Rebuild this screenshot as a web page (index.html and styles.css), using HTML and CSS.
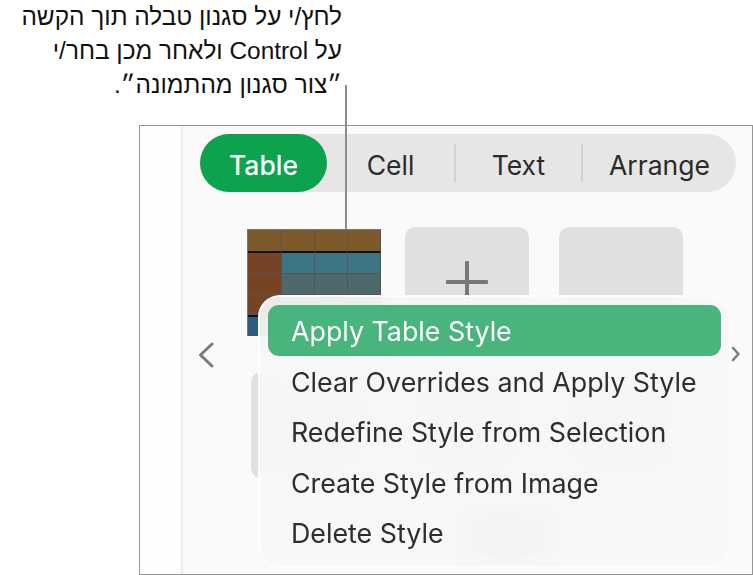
FILE: index.html
```html
<!DOCTYPE html>
<html lang="he">
<head>
<meta charset="utf-8">
<title>Table style menu</title>
<link rel="stylesheet" href="styles.css">
</head>
<body>
<div class="page">
  <p class="caption" dir="rtl">לחץ/י על סגנון טבלה תוך הקשה<br>על Control ולאחר מכן בחר/י<br>״צור סגנון מהתמונה״.</p>
  <div class="frame" dir="ltr">
    <div class="rail"></div>
    <div class="panel">
      <div class="tabs">
        <div class="tab tab-active">Table</div>
        <div class="tab tab-cell">Cell</div>
        <div class="tab-sep"></div>
        <div class="tab tab-text">Text</div>
        <div class="tab-sep"></div>
        <div class="tab tab-arrange">Arrange</div>
      </div>
      <div class="row row-first">
        <div class="thumb">
          <div class="c hd"></div><div class="c hd"></div><div class="c hd"></div><div class="c hd"></div>
          <div class="c side"></div><div class="c teal"></div><div class="c teal"></div><div class="c teal"></div>
          <div class="c side"></div><div class="c slate"></div><div class="c slate"></div><div class="c slate"></div>
          <div class="c side"></div><div class="c slate"></div><div class="c slate"></div><div class="c slate"></div>
          <div class="c ft"></div><div class="c ft"></div><div class="c ft"></div><div class="c ft"></div>
        </div>
        <div class="card card-plus">
          <svg class="plus" width="42" height="42" viewBox="0 0 42 42"><path d="M21 1.500V40.500M1.500 21H40.500" fill="none" stroke="#777" stroke-width="4" stroke-linecap="round"/></svg>
        </div>
        <div class="card card-last"></div>
      </div>
      <div class="row row-second">
        <div class="card card-low"></div>
        <div class="card card-low card-mid"></div>
        <div class="card card-low card-last"></div>
      </div>
      <div class="ghost"></div>
    </div>
    <svg class="chev chev-l" width="16" height="26" viewBox="0 0 16 26"><path d="M14 2L2.500 13L14 24" fill="none" stroke="#7b7b7b" stroke-width="3" stroke-linecap="round" stroke-linejoin="round"/></svg>
    <svg class="chev chev-r" width="10" height="16" viewBox="0 0 10 16"><path d="M2 2L7.500 8L2 14" fill="none" stroke="#7b7b7b" stroke-width="2.500" stroke-linecap="round" stroke-linejoin="round"/></svg>
    <div class="menu">
      <div class="item item-on">Apply Table Style</div>
      <div class="item">Clear Overrides and Apply Style</div>
      <div class="item">Redefine Style from Selection</div>
      <div class="item">Create Style from Image</div>
      <div class="item">Delete Style</div>
    </div>
  </div>
  <div class="leader"></div>
</div>
</body>
</html>
```
FILE: styles.css
```css
* { box-sizing: border-box; }
html, body { margin: 0; padding: 0; background: #fff; }
.page { position: relative; width: 753px; height: 575px; overflow: hidden; font-family: "Inter", "Liberation Sans", sans-serif; }
.caption { margin: 0; width: 342px; height: 125px; font: 24.400px/34px "Liberation Sans", sans-serif; color: #111; text-align: right; }
.frame { position: relative; display: flex; width: 614px; height: 450px; margin-left: 139px; border: 1px solid #969696; overflow: hidden; background: #fafafa; }
.rail { width: 43px; background: #fefefe; border-right: 2px solid #ececec; flex: none; }
.panel { flex: 1; padding: 8px 0 0 17px; min-width: 0; }
.tabs { display: flex; align-items: center; width: 536px; height: 58px; background: #e6e6e6; border-radius: 29px; font-size: 26.500px; color: #2b2b2b; }
.tab { text-align: center; line-height: 62px; height: 58px; }
.tab-active { width: 127px; background: #0ca24e; color: #fff; border-radius: 29px; font-weight: 500; }
.tab-cell { width: 127px; }
.tab-text { width: 125px; }
.tab-arrange { width: 153px; }
.tab-sep { width: 2px; height: 38px; background: #d2d2d2; flex: none; }
.row { display: flex; }
.row-first { margin-top: 35px; padding-left: 47px; }
.row-second { margin-top: 35px; padding-left: 51px; }
.thumb { display: grid; grid-template-columns: 34px 33px 33px 33px; grid-template-rows: 23px 21px 21px 20px 21px; width: 134px; height: 107px; margin-top: 2px; border: 1px solid #777; background: #555; flex: none; }
.c { border-right: 1px solid #555; border-bottom: 1px solid #555; }
.hd { background: #7d5a2c; border-bottom: 2px solid #111; }
.side { background: #764325; }
.teal { background: #3d7585; }
.slate { background: #4e686c; }
.ft { background: #2b5d7e; border-top: 2px solid #111; }
.card { width: 124px; height: 110px; background: #e0e0e0; border-radius: 10px; flex: none; }
.card-plus { margin-left: 24px; display: flex; align-items: center; justify-content: center; }
.card-last { margin-left: 30px; }
.card-low { height: 106px; }
.card-mid { margin-left: 30px; }
.ghost { width: 85px; height: 40px; margin: 37px 0 0 265px; background: #a8a8a8; }
.chev { position: absolute; }
.chev-l { left: 58px; top: 216px; }
.chev-r { left: 591px; top: 220px; }
.menu { position: absolute; left: 118px; top: 169px; width: 473px; height: 273px; padding: 8px 8px 0 9px; background: rgba(248, 248, 248, 0.93); backdrop-filter: blur(16px); border: 2px solid rgba(255, 255, 255, 0.8); border-radius: 22px; font-size: 26.800px; color: #2e2e2e; }
.item { height: 50.500px; line-height: 52px; padding-left: 23px; white-space: nowrap; margin-left: -1px; }
.item-on { background: #49b57c; color: #fff; border-radius: 11px; }
.leader { position: absolute; left: 345px; top: 85px; width: 2px; height: 144px; background: #8c8c8c; }
```
